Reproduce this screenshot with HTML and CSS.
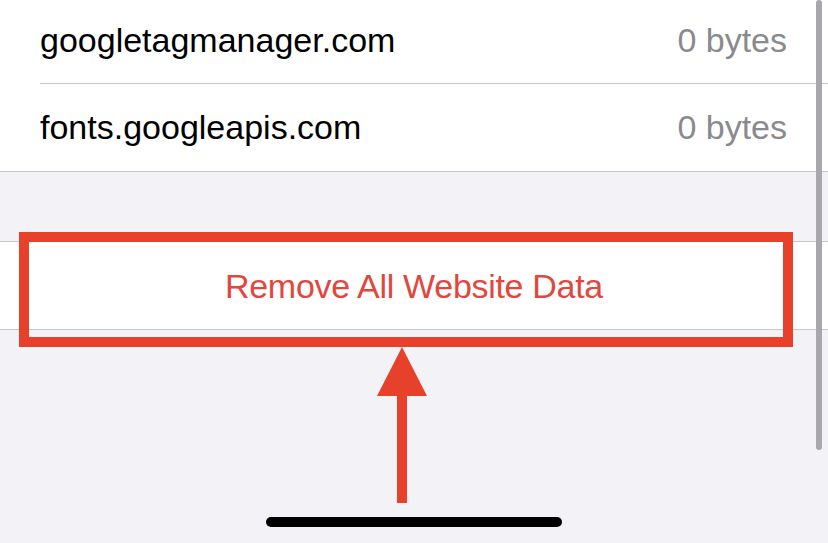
FILE: index.html
```html
<!DOCTYPE html>
<html>
<head>
<meta charset="utf-8">
<link rel="stylesheet" href="styles.css">
</head>
<body>
<div class="screen">
  <div class="group list">
    <div class="row first">
      <div class="row-inner">
        <span class="site">googletagmanager.com</span>
        <span class="size">0 bytes</span>
      </div>
    </div>
    <div class="row">
      <div class="row-inner last">
        <span class="site">fonts.googleapis.com</span>
        <span class="size">0 bytes</span>
      </div>
    </div>
  </div>
  <div class="group action">
    <div class="remove">Remove All Website Data</div>
  </div>
  <div class="scrollbar"></div>
  <div class="highlight"></div>
  <svg class="arrow" width="50" height="156" viewBox="0 0 50 156">
    <polygon points="25,0 50,49 0,49" fill="#e8412b"/>
    <rect x="20" y="48" width="10" height="108" fill="#e8412b"/>
  </svg>
  <div class="home-indicator"></div>
</div>
</body>
</html>
```
FILE: styles.css
```css
html, body {
  margin: 0;
  padding: 0;
}
body {
  background: #f2f2f7;
  font-family: "Liberation Sans", Arial, sans-serif;
}
.screen {
  position: relative;
  width: 828px;
  height: 543px;
  overflow: hidden;
  background: #f2f2f7;
}
.group {
  background: #ffffff;
}
.list {
  border-bottom: 1px solid #c6c6c9;
}
.row {
  padding-left: 40px;
}
.row.first {
  margin-top: -3px;
}
.row-inner {
  display: flex;
  justify-content: space-between;
  align-items: center;
  padding-right: 41px;
  height: 86px;
  line-height: 86px;
  font-size: 34px;
  border-bottom: 1px solid #c6c6c9;
}
.row-inner.last {
  border-bottom: none;
  height: 87px;
  line-height: 87px;
}
.site {
  color: #000000;
}
.size {
  color: #8a8a8e;
}
.action {
  margin-top: 69px;
  border-top: 1px solid #c6c6c9;
  border-bottom: 1px solid #c6c6c9;
}
.remove {
  height: 87px;
  line-height: 88px;
  text-align: center;
  font-size: 34px;
  color: #e2473d;
  letter-spacing: -0.3px;
}
.scrollbar {
  position: absolute;
  left: 816px;
  top: 0;
  width: 6px;
  height: 450px;
  border-radius: 3px;
  background: #a8a8ac;
}
.highlight {
  position: absolute;
  left: 19px;
  top: 232px;
  width: 754px;
  height: 95px;
  border: 10px solid #e8412b;
}
.arrow {
  position: absolute;
  left: 377px;
  top: 347px;
  display: block;
}
.home-indicator {
  position: absolute;
  left: 266px;
  top: 517px;
  width: 296px;
  height: 10px;
  border-radius: 5px;
  background: #000000;
}
```
